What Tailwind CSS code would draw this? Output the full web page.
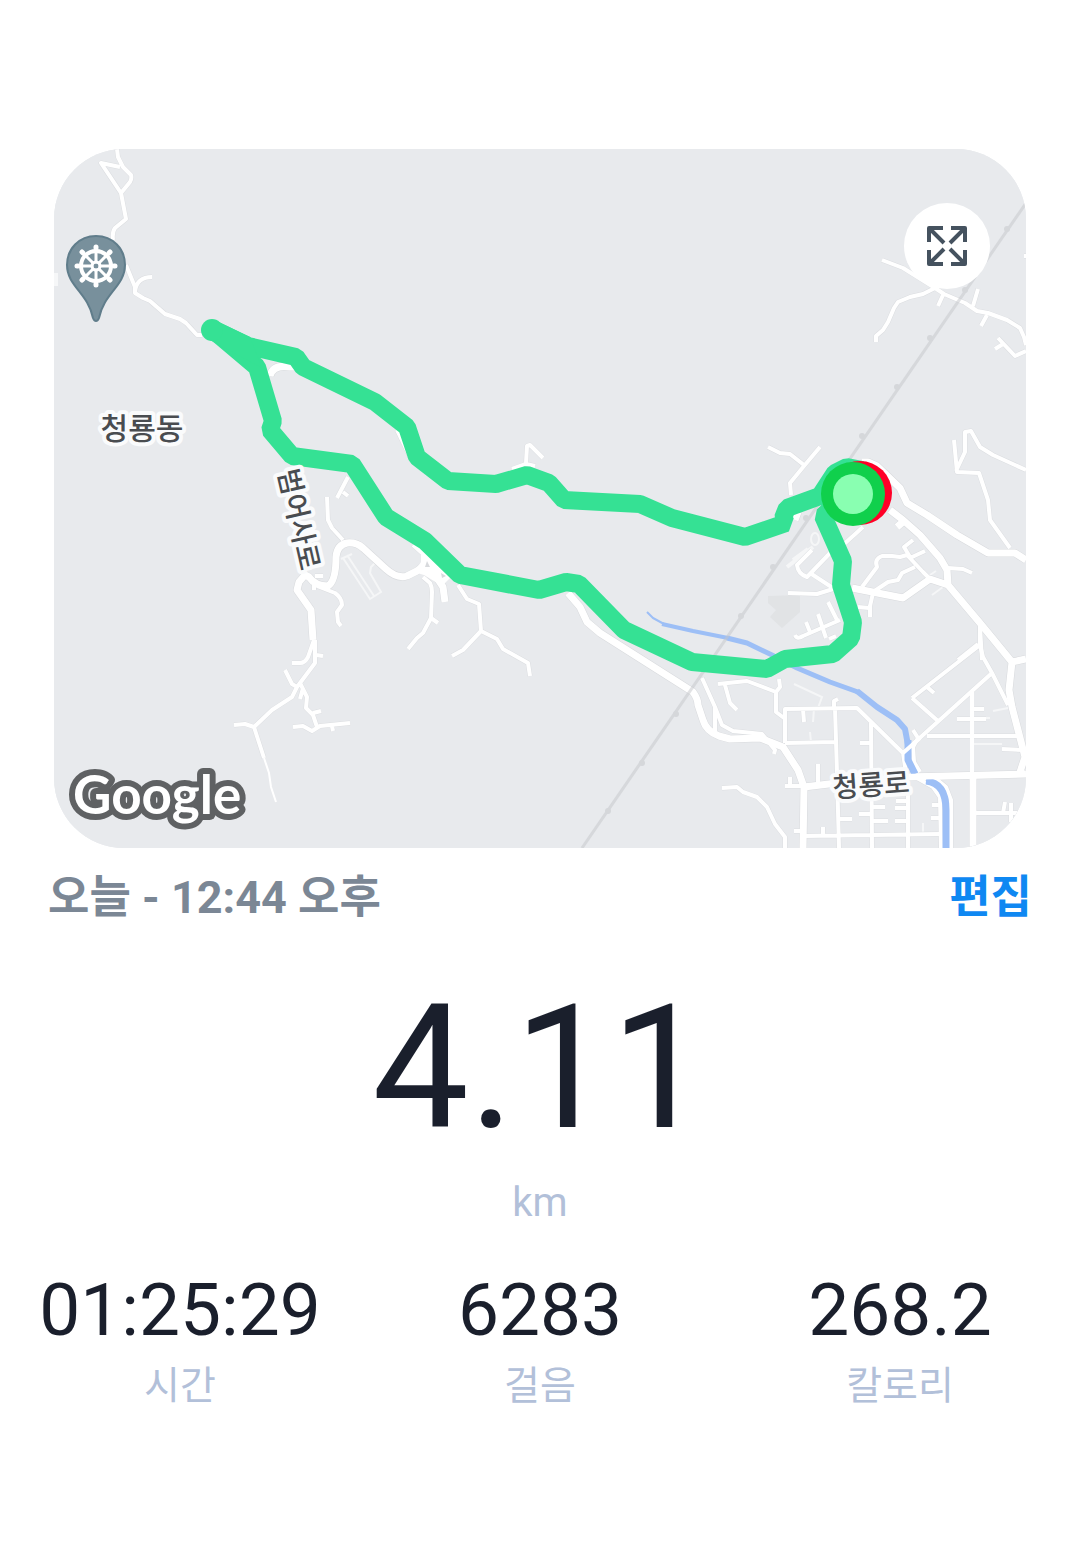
<!DOCTYPE html>
<html lang="ko">
<head>
  <meta charset="UTF-8" />
  <meta name="viewport" content="width=device-width, initial-scale=1.0"/>
  <title>걷기 기록</title>
  <script src="https://cdn.jsdelivr.net/npm/@tailwindcss/browser@4"></script>
</head>
<body class="bg-white min-h-screen font-['Roboto','Noto_Sans_CJK_KR',sans-serif] text-[#1a1f2c]">

  <main class="pt-[149px] pb-32">

    <!-- Map -->
    <section class="relative mx-[54px] rounded-[70px] overflow-hidden bg-[#e8eaed]">
      <svg class="block w-full h-auto" viewBox="54 149 972 699" role="img" aria-label="경로 지도">
        <rect x="54" y="149" width="972" height="699" fill="#e8eaed"/>

        <!-- Lots and buildings -->
        <path fill="#e1e3e5" d="M768 596L800 595V612L782 628 770 617 776 610 768 603Z"/>
        <rect x="54" y="273" width="4" height="13" fill="#f6f7f8"/>
        <g fill="none" stroke="#f5f6f7" stroke-width="2">
          <path d="M343 558L370 599 381 592 370 573 371 567 375 563M347 555L374 596M341 559L352 554"/>
          <path stroke-width="4" d="M787 567L813 547M793 560L808 549"/>
          <ellipse cx="815" cy="539" rx="4" ry="6"/>
          <path d="M794 684L822 697 818 708M814 709L813 722M810 732L811 742M923 823V834M984 718H990M993 711L1008 708M973 744H1002M932 595L943 587M930 575L936 571"/>
        </g>

        <!-- Road casing and fill share the same shapes -->
        <defs>
          <g id="minor" fill="none" stroke-linejoin="round">
            <path d="M117 149L118 157 123 167 131 175Q132 179 130 182L121 193 101 163 120 167M121 193L126 219 115 228Q112 232 113 240M126 265L135 287V293L143 298 150 301 165 314 180 319 186 323 197 335H202M135 291Q137 277 152 277"/>
            <path d="M882 260L903 268 935 288 944 294 965 303 977 311 988 313 1007 320 1020 328 1024 337 1026 345M935 288L923 294 910 297 898 302 894 308 888 322 883 330 876 336V342M943 295L938 306M973 306L978 289M987 315L981 326M998 338L1015 356 1026 351M1003 344L995 349M1024 256H1028"/>
            <path d="M348 477L337 498M343 492L348 496M327 497L328 520 332 528 343 540M315 576H323M314 590V583M317 586L335 593Q342 598 342 605L337 612 338 622L341 626"/>
            <path d="M423 577L430 583Q432 587 432 592L431 618 438 623M431 618L423 633 417 638 408 649M458 585L467 599 479 604 481 631 497 639 503 649 528 663 530 676M481 631L463 650 452 656M526 463L527 446 530 445 543 458M512 469L526 464 535 466M397 430L410 457M413 545L422 553"/>
            <path d="M314 640L308 657Q305 663 300 663H292M316 655L323 656M315 640V663L297 687 292 697 272 710 254 727 245 724 234 725M285 670L292 684 297 687M254 727L264 758M300 683L307 697 306 708 313 715 317 727M313 713L321 711M300 699L303 688M293 727L303 726 312 731 320 726 350 723M332 726L333 731"/>
            <path d="M702 678L715 707 722 725 733 731 762 734 775 750 774 754M715 707V732M718 684L747 681 776 692 780 687 779 679M776 692V712L784 718M725 685L730 703 737 710M722 788L737 787 743 792 757 797 767 807 775 824 785 837V848"/>
            <path d="M785 743V709L857 708 903 753 906 773M835 708L837 773 839 848M785 743L836 742M834 708V701L838 699M803 709L804 722M871 723L872 848M860 743H871M785 786H804M790 777V786M818 764V785M794 831H804M804 836L940 834M823 827V836M839 819H852M872 807H885M859 814H872M872 821H888M895 821H908M895 808H908M896 801H908M908 790V848M932 805H940M931 818H940"/>
            <path d="M903 753L992 673M912 698L980 645M912 698L938 721M927 687L934 693M980 623V645L983 657 992 673 1008 705M927 736H1017M972 709H984M957 719H986M1002 749L1023 750M975 813H1018M1005 802L1003 813M1011 803V822M913 730L918 738 913 747 914 762 920 772M917 778L933 787 940 797 941 848M935 778L946 787 951 800V848"/>
            <path d="M1010 548L990 520 988 500 979 473 957 472 954 440M956 471L965 452V432L971 431 980 447 993 455 1026 470M768 447L780 453 790 454 804 465M820 447L804 466 790 483 791 495M788 593L817 594 833 589M948 568L963 569 972 573"/>
            <path d="M862 587L877 567Q874 559 882 556H892L900 557 907 555 923 572 930 579M873 592L888 582 898 580 902 573 915 567M913 540L904 547 910 557M910 558L925 551M873 593L870 606V617M858 607L869 608M795 635Q797 640 803 636L840 620M828 602L837 620M818 614L826 638M806 622L810 632M829 639L836 636M980 627L982 660M958 660L978 644"/>
            <path d="M812 550L797 565Q798 574 807 577L830 553M810 573L833 588M863 527L843 545"/>
          </g>
          <g id="major" fill="none" stroke-linejoin="round">
            <path d="M313 640L311 610 297 590 299 582 305 575 309 577Q315 586 328 586 336 581 336 557 337 545 347 543 356 542 363 548L386 569Q397 579 407 576L417 571 427 563M424 568L437 578 443 587 445 602"/>
            <path d="M568 593L580 607 587 622 600 633 693 692Q698 699 698 705L703 720Q706 731 719 736L730 739 760 738 783 747 798 770 804 787 803 848"/>
            <path d="M804 787L837 783 908 777 1026 774M890 510L903 520 920 535 940 558 947 570 948 585M948 585L980 623 1012 662 1026 659M1012 662L1009 690 1012 707 1018 730 1025 757 1020 772M897 527L904 521M852 588L903 598 930 579 948 585"/>
            <path d="M862 462H868L877 466 900 488 907 503 927 515 957 535 988 553 1015 553 1026 560M798 512L795 520M270 376Q273 364 290 367L300 367M973 776V848"/>
          </g>
        </defs>
        <use href="#minor" stroke="#dcdee1" stroke-width="5"/>
        <use href="#major" stroke="#d8dadd" stroke-width="8"/>
        <path fill="none" stroke="#fff" stroke-width="4" d="M972 692V776"/>
        <use href="#minor" stroke="#fff" stroke-width="4"/>
        <use href="#major" stroke="#fff" stroke-width="7"/>
        <path fill="#fff" d="M413 543L424 550 450 578 442 586 424 575 414 572 421 562V553Z"/>
        <path fill="#d8dadd" d="M427 561L430 567H425ZM441 573L446 576 442 578Z"/>
        <path fill="none" stroke="#fff" stroke-width="2" d="M264 758L269 773 271 787 276 802"/>

        <!-- Stream -->
        <g fill="none" stroke="#9dbff6" stroke-linejoin="round">
          <path stroke-width="2" d="M647 612L653 618 664 624"/>
          <path stroke-width="4" d="M662 624L693 631 728 638"/>
          <path stroke-width="5" d="M727 638L747 643 772 655 797 668 830 682 858 692"/>
          <path stroke-width="6" d="M857 691L877 707 897 720 905 729 908 745 908 760"/>
          <path stroke-width="7" d="M908 740V760L915 774M926 781Q946 783 946 810V848"/>
        </g>
        <path stroke="#fff" stroke-width="6" d="M903 777L945 776"/>
        <path stroke="#fff" stroke-width="4" d="M903 753L920 738"/>

        <!-- Railway -->
        <path stroke="#c4c6ca" stroke-opacity=".5" stroke-width="3" d="M582 848L1026 203"/>
        <g fill="#d5d7da">
          <circle cx="1007" cy="229" r="3"/>
          <circle cx="965" cy="290" r="3"/>
          <circle cx="930" cy="338" r="3"/>
          <circle cx="897" cy="387" r="3"/>
          <circle cx="862" cy="436" r="3"/>
          <circle cx="806" cy="518" r="3"/>
          <circle cx="773" cy="567" r="3"/>
          <circle cx="741" cy="616" r="3"/>
          <circle cx="676" cy="714" r="3"/>
          <circle cx="642" cy="763" r="3"/>
          <circle cx="608" cy="811" r="3"/>
        </g>

        <!-- Walked route -->
        <path fill="none" stroke="#35e194" stroke-width="18" stroke-linecap="round" stroke-linejoin="bevel" d="M860 493L862 470 847 467 835 473 820 496 787 508 783 518 786 523 745 537 672 518 640 504 564 500 549 483 527 475 496 484 448 481 417 457 407 427 375 402 303 367 296 357 248 346 212 329 257 367 273 421 270 430 292 456 352 464 386 517 425 541 460 575 539 590 566 582 579 584 624 630 692 662 767 669 785 659 833 654 851 638 853 622 841 585 843 561 823 516 840 500"/>
        <path fill="#35e194" d="M217 321L250 337 262 368 206 338Z"/>
        <circle cx="212" cy="330" r="11" fill="#35e194"/>
        <circle cx="860" cy="493" r="32" fill="#ff0027"/>
        <circle cx="853" cy="494" r="32" fill="#10d04c"/>
        <circle cx="853" cy="494" r="20" fill="#89ffb1"/>

        <!-- Temple pin -->
        <path fill="#78909c" stroke="#607d8b" stroke-width="2" d="M96 236C79 236 67 249 67 265 67 286 88 293 93 318Q94 321 96 321 98 321 99 318C104 293 125 286 125 265 125 249 113 236 96 236Z"/>
        <g transform="translate(96 266)" fill="none" stroke="#fff" stroke-linecap="round">
          <circle r="15" stroke-width="4"/>
          <path stroke-width="3" d="M0-19V-4M0 4V19M-19 0H-4M4 0H19M-13-13L-3-3M3 3L13 13M13-13L3-3M-3 3L-13 13"/>
          <circle r="4" stroke-width="3"/>
          <path stroke-width="5" d="M0-19V-18M0 18V19M-19 0H-18M18 0H19M-14-14L-13-13M14-14L13-13M-14 14L-13 13M14 14L13 13"/>
        </g>

        <!-- Place names -->
        <g class="font-['Noto_Sans_CJK_KR',sans-serif]" font-size="30" font-weight="500" text-anchor="middle" fill="#494c50" stroke="#fafbfc" stroke-width="8" stroke-linejoin="round" paint-order="stroke">
          <text x="142" y="439">청룡동</text>
          <text x="0" y="11" font-size="28" transform="translate(300 519) rotate(77)">범어사로</text>
          <text x="0" y="11" font-size="28" transform="translate(871 784) rotate(-4)">청룡로</text>
        </g>

        <text class="font-['Lato',sans-serif]" x="73" y="814" font-size="53" font-weight="700" fill="#fff" stroke="#5f6163" stroke-width="12" stroke-linejoin="round" paint-order="stroke">Google</text>
      </svg>

      <!-- Fullscreen -->
      <button type="button" aria-label="전체 화면" class="absolute top-[54px] right-9 size-[86px] rounded-full bg-white flex items-center justify-center text-[#45525f]">
        <svg class="size-[42px]" viewBox="0 0 42 42" fill="none" stroke="currentColor" stroke-width="4">
          <path stroke-linejoin="round" d="M17 3H3V17M25 3H39V17M17 39H3V25M25 39H39V25"/>
          <path d="M3 3L18 18M39 3L24 18M3 39L18 24M39 39L24 24"/>
        </svg>
      </button>
    </section>

    <!-- Time and edit -->
    <div class="mt-5 px-12 flex items-center justify-between text-[45px] leading-[60px] font-bold">
      <h1 class="text-[#7b8795]">오늘 - 12:44 오후</h1>
      <button type="button" class="text-[#0f88f2]">편집</button>
    </div>

    <!-- Distance -->
    <div class="mt-[54px] text-center">
      <p class="text-[172px] leading-[172px]">4.11</p>
      <p class="mt-[25px] text-[40px] leading-12 text-[#b2c0d9]">km</p>
    </div>

    <!-- Stats -->
    <dl class="mt-[43px] grid grid-cols-3 text-center">
      <div class="flex flex-col-reverse gap-3">
        <dt class="text-[39px] leading-12 text-[#b2c0d9]">시간</dt>
        <dd class="text-[73px] leading-20">01:25:29</dd>
      </div>
      <div class="flex flex-col-reverse gap-3">
        <dt class="text-[39px] leading-12 text-[#b2c0d9]">걸음</dt>
        <dd class="text-[73px] leading-20">6283</dd>
      </div>
      <div class="flex flex-col-reverse gap-3">
        <dt class="text-[39px] leading-12 text-[#b2c0d9]">칼로리</dt>
        <dd class="text-[73px] leading-20">268.2</dd>
      </div>
    </dl>

  </main>

</body>
</html>
